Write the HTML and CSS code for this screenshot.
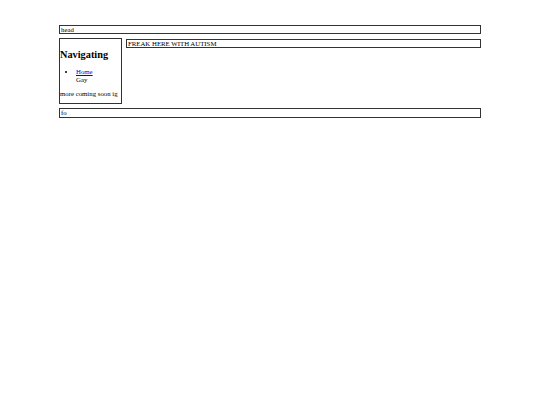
FILE: index.html
```html
<!DOCTYPE html>
<html>
<head>
<meta charset="utf-8">
<link rel="stylesheet" href="styles.css">
</head>
<body>
<div class="page">
  <div class="box header">head</div>
  <div class="middle">
    <div class="box sidebar">
      <h2 class="nav-title">Navigating</h2>
      <ul class="nav-list">
        <li><a href="#">Home</a></li>
        <li class="plain">Gay</li>
      </ul>
      <p class="note">more coming soon ig</p>
    </div>
    <div class="box main">FREAK HERE WITH AUTISM</div>
  </div>
  <div class="box footer">fo</div>
</div>
</body>
</html>
```
FILE: styles.css
```css
html, body {
  margin: 0;
  padding: 0;
  background: #fff;
}
body {
  font-family: "Liberation Serif", "Times New Roman", serif;
  font-size: 6.8px;
  line-height: 8px;
  color: #000;
}
.page {
  width: 422px;
  margin: 0 auto;
  padding-top: 25px;
  display: flex;
  flex-direction: column;
  gap: 4px;
}
.box {
  border: 1px solid #333;
  padding: 0 1px;
}
.header {
  height: 7px;
  line-height: 7px;
}
.footer {
  height: 8px;
}
.middle {
  display: flex;
  gap: 4px;
  align-items: flex-start;
}
.sidebar {
  width: 61px;
  height: 64px;
  flex: none;
  padding: 0;
}
.main {
  flex: 1;
  height: 7px;
  line-height: 7px;
  margin-top: 1px;
}
.nav-title {
  font-size: 10.3px;
  line-height: 12px;
  margin: 10px 0 0;
}
.nav-list {
  margin: 7px 0 0;
  padding-left: 16px;
}
.nav-list li {
  line-height: 7.5px;
}
.nav-list li.plain {
  list-style: none;
}
.nav-list a {
  color: #00e;
}
.note {
  margin: 7px 0 0;
  white-space: nowrap;
}
```
